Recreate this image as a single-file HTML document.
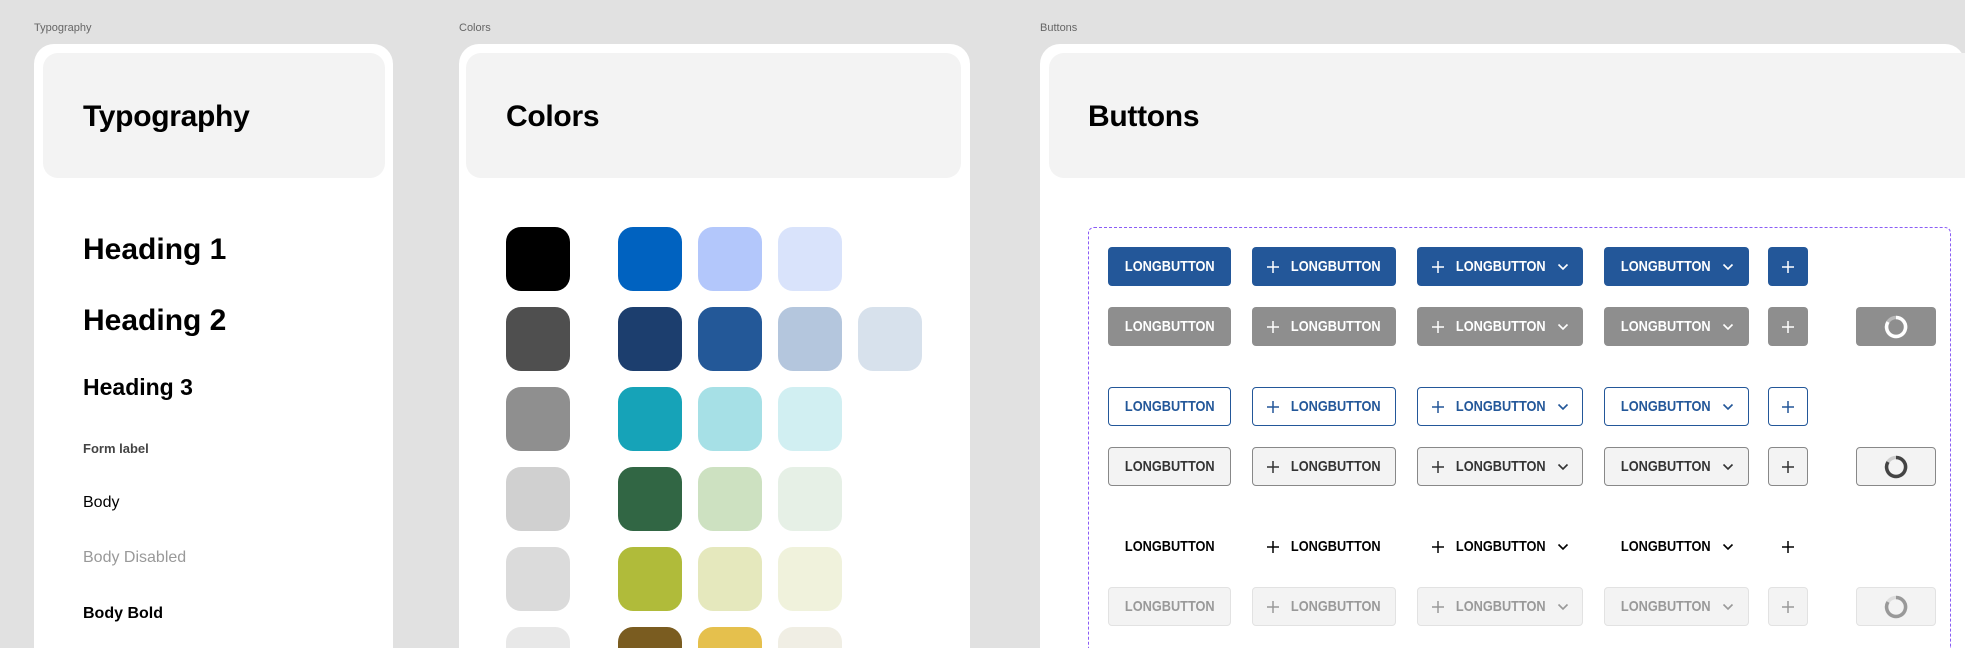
<!DOCTYPE html>
<html style="width:1965px;height:648px;overflow:hidden"><head><meta charset="utf-8"><style>
*{box-sizing:border-box;margin:0;padding:0}
body{width:1965px;height:648px;background:#e1e1e1;font-family:"Liberation Sans",sans-serif;position:relative;overflow:hidden}
.lbl{position:absolute;top:22px;font-size:11px;color:#666}
.card{position:absolute;top:44px;background:#fff;border-radius:20px 20px 0 0;height:604px}
.hdr{position:absolute;top:9px;height:125px;background:#f3f3f3;border-radius:15px}
.hdr h1{position:absolute;left:40px;top:47px;font-size:30px;font-weight:bold;color:#000;letter-spacing:-0.3px}
.t{position:absolute;left:83px;color:#000}
.sw{position:absolute;width:64px;height:64px;border-radius:15px}
.box{position:absolute;left:1088px;top:227px;width:863px;height:421px;border:1.5px dashed #8b5cf6;border-bottom:none;border-radius:6px 6px 0 0}
.b{position:absolute;height:39px;border-radius:4px;display:flex;align-items:center;justify-content:center;gap:9px;font-weight:bold;font-size:15px}
.b span{display:inline-block;transform:scaleX(.85);margin:0 -6px}
.b svg{flex:none}
.p{background:#235799;color:#fff}
.g{background:#8e8e8e;color:#fff}
.o{background:#fff;border:1.5px solid #235799;color:#235799}
.s{background:#f3f3f3;border:1.5px solid #888;color:#333}
.x{color:#000}
.d{background:#f3f3f3;border:1.5px solid #e2e2e2;color:#999}
</style></head><body>
<div class="lbl" style="left:34px">Typography</div>
<div class="lbl" style="left:459px">Colors</div>
<div class="lbl" style="left:1040px">Buttons</div>

<div class="card" style="left:34px;width:359px">
<div class="hdr" style="left:9px;width:342px"><h1>Typography</h1></div>
</div>
<div class="t" style="top:233px;font-size:30px;font-weight:bold">Heading 1</div>
<div class="t" style="top:304px;font-size:30px;font-weight:bold">Heading 2</div>
<div class="t" style="top:374px;font-size:23px;font-weight:bold">Heading 3</div>
<div class="t" style="top:441px;font-size:13px;font-weight:bold;color:#444">Form label</div>
<div class="t" style="top:494px;font-size:16px">Body</div>
<div class="t" style="top:549px;font-size:16px;color:#999">Body Disabled</div>
<div class="t" style="top:605px;font-size:16px;font-weight:bold">Body Bold</div>

<div class="card" style="left:459px;width:511px">
<div class="hdr" style="left:7px;width:495px"><h1 style="left:40px">Colors</h1></div>
</div>
<div class="sw" style="left:506px;top:227px;background:#000"></div>
<div class="sw" style="left:618px;top:227px;background:#0062c0"></div>
<div class="sw" style="left:698px;top:227px;background:#b3c7fb"></div>
<div class="sw" style="left:778px;top:227px;background:#d9e3fb"></div>
<div class="sw" style="left:506px;top:307px;background:#4f4f4f"></div>
<div class="sw" style="left:618px;top:307px;background:#1c3e6e"></div>
<div class="sw" style="left:698px;top:307px;background:#235898"></div>
<div class="sw" style="left:778px;top:307px;background:#b4c6dd"></div>
<div class="sw" style="left:858px;top:307px;background:#d7e1ec"></div>
<div class="sw" style="left:506px;top:387px;background:#8f8f8f"></div>
<div class="sw" style="left:618px;top:387px;background:#16a3b8"></div>
<div class="sw" style="left:698px;top:387px;background:#a6e0e6"></div>
<div class="sw" style="left:778px;top:387px;background:#d1eff2"></div>
<div class="sw" style="left:506px;top:467px;background:#d0d0d0"></div>
<div class="sw" style="left:618px;top:467px;background:#316644"></div>
<div class="sw" style="left:698px;top:467px;background:#cde1c1"></div>
<div class="sw" style="left:778px;top:467px;background:#e6f0e6"></div>
<div class="sw" style="left:506px;top:547px;background:#dbdbdb"></div>
<div class="sw" style="left:618px;top:547px;background:#b0bb3a"></div>
<div class="sw" style="left:698px;top:547px;background:#e5e8bd"></div>
<div class="sw" style="left:778px;top:547px;background:#f0f2dc"></div>
<div class="sw" style="left:506px;top:627px;height:21px;border-radius:15px 15px 0 0;background:#e8e8e8"></div>
<div class="sw" style="left:618px;top:627px;height:21px;border-radius:15px 15px 0 0;background:#7a5c20"></div>
<div class="sw" style="left:698px;top:627px;height:21px;border-radius:15px 15px 0 0;background:#e5c04d"></div>
<div class="sw" style="left:778px;top:627px;height:21px;border-radius:15px 15px 0 0;background:#f0eee4"></div>

<div class="card" style="left:1040px;width:925px">
<div class="hdr" style="left:9px;width:916px;border-radius:15px 0 0 15px"><h1 style="left:39px">Buttons</h1></div>
</div>
<div class="box"></div>

<div id="btns"></div>
<script>
var P='<svg width="14" height="14" viewBox="0 0 14 14"><path d="M7 1v12M1 7h12" stroke="currentColor" stroke-width="1.5"/></svg>';
var C='<svg width="12" height="8" viewBox="0 0 12 8"><path d="M1.5 1.5l4.5 4.5 4.5-4.5" fill="none" stroke="currentColor" stroke-width="1.6"/></svg>';
var T='<span>LONGBUTTON</span>';
var rows=[['p',247,0],['g',307,1],['o',387,0],['s',447,1],['x',527,0],['d',587,1]];
var cols=[[1108,123,T],[1252,144,P+T],[1417,166,P+T+C],[1604,145,T+C],[1768,40,P]];
var h='';
rows.forEach(function(r){
 cols.forEach(function(c){h+='<div class="b '+r[0]+'" style="left:'+c[0]+'px;top:'+r[1]+'px;width:'+c[1]+'px">'+c[2]+'</div>';});
 if(r[2]){var sc=r[0]=='g'?'#fff':r[0]=='s'?'#444':'#999';var bg=r[0]=='g'?'#bbb':r[0]=='s'?'#ccc':'#ddd';
 h+='<div class="b '+r[0]+'" style="left:1856px;top:'+r[1]+'px;width:80px"><svg width="26" height="26" viewBox="0 0 26 26"><circle cx="13" cy="13" r="9.5" fill="none" stroke="'+bg+'" stroke-width="3.5"/><path d="M13 3.5A9.5 9.5 0 1 1 5 8" fill="none" stroke="'+sc+'" stroke-width="3.5"/></svg></div>';}
});
document.getElementById('btns').innerHTML=h;
</script>
</body></html>
